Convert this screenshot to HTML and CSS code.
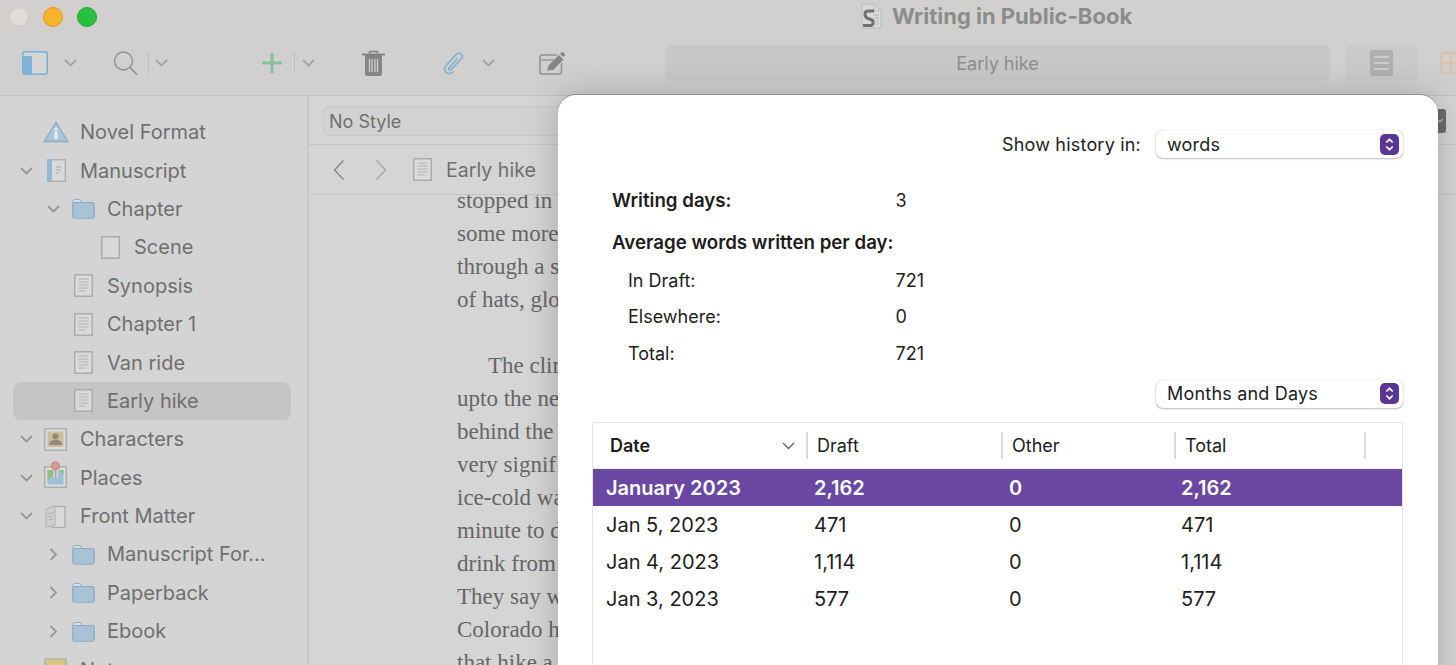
FILE: index.html
```html
<!DOCTYPE html>
<html lang="en">
<head>
<meta charset="utf-8">
<title>Writing in Public-Book</title>
<link rel="stylesheet" href="styles.css">
</head>
<body>
<svg class="defs" aria-hidden="true">
  <symbol id="chev-d" viewBox="0 0 13 8"><path d="M1 1l5.500 5.500L12 1" fill="none" stroke="currentColor" stroke-width="1.800"/></symbol>
  <symbol id="chev-r" viewBox="0 0 8 13"><path d="M1 1l5.500 5.500L1 12" fill="none" stroke="currentColor" stroke-width="1.800"/></symbol>
  <symbol id="doc" viewBox="0 0 19 23"><rect x=".75" y=".75" width="17.500" height="21.500" fill="#dadada" stroke="#a9a9a9" stroke-width="1.400"/><path d="M4.500 5h10M4.500 8h10M4.500 11h10M4.500 14h10M4.500 17h7" stroke="#b2b2b2" stroke-width="1"/></symbol>
  <symbol id="blank" viewBox="0 0 19 23"><rect x=".75" y=".75" width="17.500" height="21.500" fill="#d8d8d8" stroke="#a9a9a9" stroke-width="1.400"/></symbol>
  <symbol id="folder" viewBox="0 0 23 21"><path d="M1 4.500V3a1.500 1.500 0 0 1 1.500-1.500h5A1.500 1.500 0 0 1 9 3v1.500" fill="#d6dfe6" stroke="#8fabc1"/><rect x=".75" y="4.500" width="21.500" height="15.750" rx="1.800" fill="#a8c2d6" stroke="#8fabc1" stroke-width="1.200"/></symbol>
  <symbol id="ms" viewBox="0 0 19 23"><rect x=".75" y=".75" width="17.500" height="21.500" fill="#dadada" stroke="#a9a9a9" stroke-width="1.200"/><rect x="0" y="0" width="5" height="23" fill="#91b8d6"/><path d="M9 8h5M9 11h5M9 14h3" stroke="#a5a5a5"/></symbol>
  <symbol id="warn" viewBox="0 0 26 22"><path d="M13 1.500L25 20.500H1z" fill="#a5c6de" stroke="#8fabc1" stroke-width="1.400" stroke-linejoin="round"/><circle cx="13" cy="8" r="1.800" fill="#ececec"/><rect x="11.500" y="10.500" width="3" height="8" fill="#ececec"/></symbol>
  <symbol id="char" viewBox="0 0 23 23"><rect x=".75" y=".75" width="21.500" height="21.500" fill="#dcdcdc" stroke="#a9a9a9" stroke-width="1.300"/><rect x="3.500" y="3.500" width="16" height="15.500" fill="#cfbd9c"/><circle cx="11.500" cy="8.500" r="3" fill="#8f8a7d"/><path d="M5 17c0-4 3-5 6.500-5s6.500 1 6.500 5z" fill="#8f8a7d"/></symbol>
  <symbol id="place" viewBox="0 0 23 27"><rect x=".75" y="5.750" width="21.500" height="20.500" fill="#dcdcdc" stroke="#a9a9a9" stroke-width="1.300"/><rect x="3.500" y="9" width="16" height="14.500" fill="#9cc0da"/><path d="M3.500 9H10l-1 6-5.500 5z" fill="#92bf82"/><path d="M19.500 9v5l-4-5z" fill="#92bf82"/><rect x="9.500" y="9" width="4.500" height="8" fill="#dcdcdc"/><rect x="10.700" y="8" width="1.800" height="9" fill="#a8a8a8"/><circle cx="11.500" cy="4.800" r="4" fill="#d99a94" stroke="#b97c77" stroke-width=".8"/></symbol>
  <symbol id="front" viewBox="0 0 21 23"><rect x="7" y="1.500" width="13" height="21" fill="#dadada" stroke="#a9a9a9" stroke-width="1.200"/><path d="M1 4l9-3.500v20L1 22z" fill="#cfcfcf" stroke="#b0b0b0"/><path d="M3.500 9l5-1.500M3.500 12l4-1M4 15l3-1" stroke="#a5a5a5"/></symbol>
  <symbol id="note" viewBox="0 0 23 23"><rect x="1" y="1" width="21" height="21" fill="#d3c888" stroke="#a9a586"/></symbol>
  <symbol id="updown" viewBox="0 0 19 21"><rect width="19" height="21" rx="5" fill="#5b3795"/><path d="M6.300 8.500l3.200-3.200 3.200 3.200M6.300 12.500l3.200 3.200 3.200-3.200" fill="none" stroke="#fff" stroke-width="1.700"/></symbol>
</svg>

<div class="app">
  <header class="chrome">
    <div class="titlebar">
      <div class="lights"><span class="light light-close"></span><span class="light light-min"></span><span class="light light-max"></span></div>
      <div class="title">
        <svg class="title-icon" viewBox="0 0 21 26"><path d="M1 1h12l7 7v17H1z" fill="#d9d9d9" stroke="#bababa"/><path d="M13 1v7h7" fill="none" stroke="#bababa"/><path d="M12 12h6M13 15h5M14 18h4M14 21h4" stroke="#b5b5b5"/><path d="M13 8H7C3 8 3 14 7 15.500l3 1c3 1 3 6-1 6H2" fill="none" stroke="#6f6f6f" stroke-width="3"/></svg>
        <span class="title-text">Writing in Public-Book</span>
      </div>
    </div>
    <div class="toolbar">
      <svg class="tb-layout" viewBox="0 0 26 24"><rect x=".75" y=".75" width="24.500" height="22.500" rx="2.500" fill="#d6d6d6" stroke="#78b0d8" stroke-width="1.500"/><path d="M1 5h9v18H3a2 2 0 0 1-2-2z" fill="#7fb3da"/></svg>
      <svg class="tb-chev tb-chev-a"><use href="#chev-d"/></svg>
      <svg class="tb-search" viewBox="0 0 25 24"><circle cx="10.500" cy="10" r="9" fill="none" stroke="#8f8f8f" stroke-width="1.400"/><path d="M17 16.500l7 7" stroke="#8f8f8f" stroke-width="1.600"/></svg>
      <span class="tb-sep tb-sep-a"></span>
      <svg class="tb-chev tb-chev-b"><use href="#chev-d"/></svg>
      <svg class="tb-plus" viewBox="0 0 20 20"><path d="M10 0v20M0 10h20" stroke="#86bd9b" stroke-width="3"/></svg>
      <span class="tb-sep tb-sep-b"></span>
      <svg class="tb-chev tb-chev-c"><use href="#chev-d"/></svg>
      <svg class="tb-trash" viewBox="0 0 23 26"><path d="M7.500 3.500V1.500h8v2" fill="none" stroke="#7e7e7e" stroke-width="1.500"/><path d="M0 4.500h23" stroke="#7e7e7e" stroke-width="1.800"/><path d="M3 5h17v19a2 2 0 0 1-2 2H5a2 2 0 0 1-2-2z" fill="#858585"/><path d="M7.500 9v13M10 9v13M13 9v13M15.500 9v13" stroke="#d2d2d2" stroke-width="1.200"/></svg>
      <svg class="tb-clip" viewBox="0 0 21 23"><path d="M14.500 6.500L6 16c-1 1.300.8 3 2 1.800L18.500 6.500c2.500-3-1.500-7-5-4.500L3 13.500c-3.500 4 .5 10 5 7.500 1-.5 1.500-1 2-1.500" fill="none" stroke="#79afd6" stroke-width="1.500"/></svg>
      <svg class="tb-chev tb-chev-d"><use href="#chev-d"/></svg>
      <svg class="tb-edit" viewBox="0 0 26 23"><path d="M22.500 11v9a2 2 0 0 1-2 2H3a2 2 0 0 1-2-2V5a2 2 0 0 1 2-2h15" fill="none" stroke="#8e8e8e" stroke-width="1.500"/><path d="M1 8h14" stroke="#8e8e8e" stroke-width="1.200"/><path d="M8 18.500l1.500-5L20 3l4.500 4.500L14 18zM21 2l1.500-1.500a1.200 1.200 0 0 1 1.700 0l1.500 1.500a1.200 1.200 0 0 1 0 1.700L24.500 5z" fill="#858585"/></svg>
      <div class="tb-field">Early hike</div>
      <div class="tb-btn"><svg class="tb-btn-icon" viewBox="0 0 23 26"><rect width="23" height="26" rx="2.500" fill="#b0b0ae"/><path d="M4 7h15M4 13h15M4 19h15" stroke="#d4d4d4" stroke-width="1.400"/></svg></div>
      <svg class="tb-grid" viewBox="0 0 16 22"><rect x="1" y="1" width="24" height="20" rx="2" fill="none" stroke="#dcc1ae" stroke-width="2.400"/><path d="M1 11h24M11 1v20" stroke="#dcc1ae" stroke-width="2.400"/></svg>
    </div>
  </header>

  <div class="workspace">
    <nav class="binder">
      <div class="row"><span class="chev-slot"></span><svg class="ico ico-warn"><use href="#warn"/></svg><span class="label">Novel Format</span></div>
      <div class="row"><svg class="chev"><use href="#chev-d"/></svg><svg class="ico ico-doc"><use href="#ms"/></svg><span class="label">Manuscript</span></div>
      <div class="row lv1"><svg class="chev"><use href="#chev-d"/></svg><svg class="ico ico-folder"><use href="#folder"/></svg><span class="label">Chapter</span></div>
      <div class="row lv2"><span class="chev-slot"></span><svg class="ico ico-doc"><use href="#blank"/></svg><span class="label">Scene</span></div>
      <div class="row lv1"><span class="chev-slot"></span><svg class="ico ico-doc"><use href="#doc"/></svg><span class="label">Synopsis</span></div>
      <div class="row lv1"><span class="chev-slot"></span><svg class="ico ico-doc"><use href="#doc"/></svg><span class="label">Chapter 1</span></div>
      <div class="row lv1"><span class="chev-slot"></span><svg class="ico ico-doc"><use href="#doc"/></svg><span class="label">Van ride</span></div>
      <div class="row lv1 selected"><span class="chev-slot"></span><svg class="ico ico-doc"><use href="#doc"/></svg><span class="label">Early hike</span></div>
      <div class="row"><svg class="chev"><use href="#chev-d"/></svg><svg class="ico ico-square"><use href="#char"/></svg><span class="label">Characters</span></div>
      <div class="row"><svg class="chev"><use href="#chev-d"/></svg><svg class="ico ico-place"><use href="#place"/></svg><span class="label">Places</span></div>
      <div class="row"><svg class="chev"><use href="#chev-d"/></svg><svg class="ico ico-square"><use href="#front"/></svg><span class="label">Front Matter</span></div>
      <div class="row lv1"><svg class="chev chev-right"><use href="#chev-r"/></svg><svg class="ico ico-folder"><use href="#folder"/></svg><span class="label">Manuscript For...</span></div>
      <div class="row lv1"><svg class="chev chev-right"><use href="#chev-r"/></svg><svg class="ico ico-folder"><use href="#folder"/></svg><span class="label">Paperback</span></div>
      <div class="row lv1"><svg class="chev chev-right"><use href="#chev-r"/></svg><svg class="ico ico-folder"><use href="#folder"/></svg><span class="label">Ebook</span></div>
      <div class="row"><span class="chev-slot"></span><svg class="ico ico-square"><use href="#note"/></svg><span class="label">Notes</span></div>
    </nav>

    <main class="editor">
      <div class="formatbar"><div class="style-box">No Style</div></div>
      <div class="navbar">
        <svg class="nav-arrow" viewBox="0 0 12 22"><path d="M10.500 1.500L1.500 11l9 9.500" fill="none" stroke="#8b8b8b" stroke-width="1.500"/></svg>
        <svg class="nav-arrow nav-next" viewBox="0 0 12 22"><path d="M1.500 1.500l9 9.500-9 9.500" fill="none" stroke="#a8a8a8" stroke-width="1.500"/></svg>
        <svg class="nav-doc"><use href="#doc"/></svg>
        <span class="nav-title">Early hike</span>
      </div>
      <div class="page">
        <div class="pagetext">
          <p class="line">stopped in</p>
          <p class="line">some more</p>
          <p class="line">through a s</p>
          <p class="line">of hats, glo</p>
          <p class="line line-blank"></p>
          <p class="line line-indent">The clim</p>
          <p class="line">upto the ne</p>
          <p class="line">behind the</p>
          <p class="line">very signif</p>
          <p class="line">ice-cold wa</p>
          <p class="line">minute to d</p>
          <p class="line">drink from</p>
          <p class="line">They say w</p>
          <p class="line">Colorado h</p>
          <p class="line">that hike a</p>
        </div>
      </div>
    </main>
  </div>

  <svg class="edge-tab" viewBox="0 0 8 24"><path d="M0 0h5a3 3 0 0 1 3 3v18a3 3 0 0 1-3 3H0z" fill="#6b6b6b"/><path d="M0 11l2 2 3-3" fill="none" stroke="#bbb" stroke-width="1.200"/></svg>

  <section class="sheet">
    <div class="picker-row">
      <span>Show history in:</span>
      <div class="picker"><span>words</span><svg class="stepper"><use href="#updown"/></svg></div>
    </div>
    <div class="stats">
      <div class="stat"><b class="stat-name">Writing days:</b><span>3</span></div>
      <div class="stat stat-head"><b>Average words written per day:</b></div>
      <div class="stat stat-sub"><span class="stat-name">In Draft:</span><span>721</span></div>
      <div class="stat stat-sub"><span class="stat-name">Elsewhere:</span><span>0</span></div>
      <div class="stat stat-sub"><span class="stat-name">Total:</span><span>721</span></div>
    </div>
    <div class="picker-row picker-row-b">
      <div class="picker"><span>Months and Days</span><svg class="stepper"><use href="#updown"/></svg></div>
    </div>
    <div class="table">
      <div class="thead">
        <div class="th th-date"><b>Date</b><svg class="sort" viewBox="0 0 13 8"><path d="M1 1l5.500 5.500L12 1" fill="none" stroke="#666" stroke-width="1.300"/></svg></div>
        <div class="th">Draft</div>
        <div class="th">Other</div>
        <div class="th">Total</div>
        <div class="th th-end"></div>
      </div>
      <div class="tr tr-selected"><span class="td-date">January 2023</span><span>2,162</span><span>0</span><span class="td-total">2,162</span></div>
      <div class="tr"><span class="td-date">Jan 5, 2023</span><span>471</span><span>0</span><span class="td-total">471</span></div>
      <div class="tr"><span class="td-date">Jan 4, 2023</span><span>1,114</span><span>0</span><span class="td-total">1,114</span></div>
      <div class="tr"><span class="td-date">Jan 3, 2023</span><span>577</span><span>0</span><span class="td-total">577</span></div>
    </div>
  </section>
</div>
</body>
</html>
```
FILE: styles.css
```css
* { box-sizing: border-box; }
html, body { margin: 0; padding: 0; }
body { font-family: Inter, "Liberation Sans", sans-serif; background: #d4d4d4; }
.defs { width: 0; height: 0; display: block; overflow: hidden; }

.app { position: relative; width: 1456px; height: 665px; overflow: hidden; display: flex; flex-direction: column; background: #d4d4d4; }

/* window chrome */
.chrome { height: 96px; flex: none; background: #d1d0ce; border-bottom: 1px solid #c3c3c2; }
.titlebar { height: 33px; display: flex; align-items: flex-start; }
.lights { display: flex; gap: 14px; padding: 7px 0 0 9px; }
.light { width: 20px; height: 20px; border-radius: 50%; }
.light-close { background: #e0dcd6; border: 1px solid #cbc7c1; }
.light-min { background: #f7b32b; border: 1px solid #dd9a1c; }
.light-max { background: #27c13f; border: 1px solid #1ca82f; }
.title { display: flex; align-items: center; gap: 10px; margin-left: 764px; height: 32px; }
.title-icon { width: 21px; height: 26px; }
.title-text { font-size: 22px; font-weight: 700; color: #8c8c8a; white-space: nowrap; }

.toolbar { height: 62px; display: flex; align-items: center; padding: 0 0 2px 22px; }
.tb-layout { width: 26px; height: 24px; flex: none; }
.tb-chev { width: 13px; height: 8px; color: #a3a3a3; flex: none; }
.tb-chev-a { margin-left: 16px; }
.tb-search { width: 25px; height: 24px; margin-left: 36px; flex: none; }
.tb-sep { width: 1px; height: 22px; background: #bdbdbc; flex: none; }
.tb-sep-a { margin-left: 10px; }
.tb-chev-b { margin-left: 6px; }
.tb-plus { width: 20px; height: 20px; margin-left: 94px; flex: none; }
.tb-sep-b { margin-left: 12px; }
.tb-chev-c { margin-left: 7px; }
.tb-trash { width: 23px; height: 26px; margin-left: 47px; flex: none; }
.tb-clip { width: 21px; height: 23px; margin-left: 58px; flex: none; }
.tb-chev-d { margin-left: 18px; }
.tb-edit { width: 26px; height: 23px; margin-left: 44px; flex: none; }
.tb-field { width: 665px; height: 36px; margin-left: 100px; background: #c9c8c6; border-radius: 6px; display: flex; align-items: center; justify-content: center; font-size: 18px; color: #8f8f8d; flex: none; }
.tb-btn { width: 73px; height: 36px; margin-left: 15px; background: #cbcac8; border-radius: 6px; display: flex; align-items: center; justify-content: center; flex: none; }
.tb-btn-icon { width: 23px; height: 26px; }
.tb-grid { width: 16px; height: 22px; margin-left: 22px; flex: none; }

/* main area */
.workspace { flex: 1; display: flex; min-height: 0; }
.binder { width: 309px; flex: none; padding-top: 17px; border-right: 2px solid #c8c8c8; background: #d4d4d4; overflow: hidden; }
.row { height: 38.4px; margin: 0 16px 0 13px; padding-left: 7px; display: flex; align-items: center; border-radius: 8px; color: #6f6f6f; font-size: 20px; white-space: nowrap; }
.row.lv1 { padding-left: 34px; }
.row.lv2 { padding-left: 61px; }
.row.selected { background: #c5c5c5; }
.chev, .chev-slot { width: 13px; height: 8px; flex: none; color: #969696; }
.chev-right { height: 13px; }
.ico { flex: none; margin-left: 11px; }
.ico-doc { width: 19px; height: 23px; margin-left: 14px; margin-right: 14px; }
.ico-folder { width: 23px; height: 21px; margin-left: 12px; margin-right: 12px; }
.ico-warn { width: 26px; height: 22px; margin-left: 10px; margin-right: 11px; }
.ico-square { width: 23px; height: 23px; margin-right: 13px; }
.ico-place { width: 23px; height: 27px; margin-right: 13px; margin-top: -6px; }

.editor { flex: 1; min-width: 0; display: flex; flex-direction: column; background: #d5d5d5; }
.formatbar { height: 49px; flex: none; padding: 10px 0 0 14px; border-bottom: 1px solid #c6c6c6; }
.style-box { width: 400px; height: 30px; padding-left: 5px; display: flex; align-items: center; border: 1px solid #c8c8c8; border-radius: 6px; background: #d2d2d2; font-size: 18px; color: #6f6f6f; }
.navbar { height: 50px; flex: none; padding-left: 24px; display: flex; align-items: center; border-bottom: 1px solid #c6c6c6; }
.nav-arrow { width: 12px; height: 22px; flex: none; }
.nav-next { margin-left: 30px; }
.nav-doc { width: 19px; height: 23px; margin-left: 26px; flex: none; }
.nav-title { margin-left: 14px; font-size: 19.6px; color: #6f6f6f; white-space: nowrap; }
.page { flex: 1; min-height: 0; overflow: hidden; padding-left: 148px; }
.pagetext { margin-top: -11px; font-family: "Liberation Serif", serif; font-size: 23px; color: #666; }
.line { margin: 0; height: 33px; line-height: 33px; white-space: nowrap; }
.line-indent { padding-left: 31px; }

.edge-tab { position: absolute; left: 1438px; top: 109px; width: 8px; height: 24px; }

/* modal sheet */
.sheet { position: absolute; left: 558px; top: 95px; width: 880px; height: 640px; padding: 35px 35px 0 34px; background: #fff; border-radius: 18px 18px 0 0; box-shadow: 0 -1px 0 rgba(0, 0, 0, .22), 0 0 34px rgba(0, 0, 0, .22); color: #1d1d1d; font-size: 18px; }
.picker-row { display: flex; justify-content: flex-end; align-items: center; gap: 15px; height: 28px; letter-spacing: .2px; }
.picker { width: 247px; height: 28px; padding: 0 4px 0 11px; display: flex; align-items: center; justify-content: space-between; background: #fff; border-radius: 7px; box-shadow: 0 0 1px rgba(0, 0, 0, .3), 0 1px 2px rgba(0, 0, 0, .25); }
.stepper { width: 19px; height: 21px; flex: none; }
.stats { margin-top: 24px; padding-left: 20px; }
.stat { height: 36.7px; display: flex; align-items: center; }
.stat b { font-size: 18.7px; font-weight: 600; }
.stat-name { width: 283.5px; flex: none; }
.stat-head { margin-top: 5.5px; margin-bottom: 1px; }
.stat-sub { padding-left: 16px; }
.stat-sub .stat-name { width: 267.5px; }
.picker-row-b { margin-top: 8px; }

.table { margin-top: 14.5px; height: 300px; border: 1px solid #e6e6e6; border-bottom: 0; }
.thead { display: grid; grid-template-columns: 215px 195px 173px 190px 1fr; height: 46px; align-items: center; border-bottom: 1px solid #eee; }
.th { height: 27px; display: flex; align-items: center; padding-left: 9px; border-right: 2px solid #dcdcdc; }
.th-date { padding-left: 17px; padding-right: 11px; justify-content: space-between; }
.th-date b { font-weight: 600; }
.th-end { border-right: 0; }
.sort { width: 13px; height: 8px; }
.tr { display: grid; grid-template-columns: 215px 195px 173px 190px 1fr; height: 36.8px; padding-top: 1px; align-items: center; font-size: 20px; }
.tr > span { padding-left: 6px; }
.tr > .td-date { padding-left: 13px; }
.tr > .td-total { padding-left: 5px; }
.tr-selected { background: #6947a2; color: #fff; font-weight: 600; }
```
